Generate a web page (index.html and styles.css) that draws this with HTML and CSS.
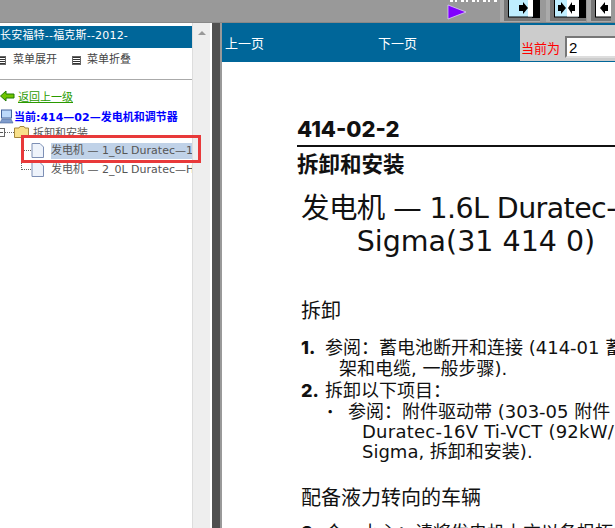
FILE: index.html
```html
<!DOCTYPE html>
<html lang="zh">
<head>
    <meta charset="UTF-8">
    <title>长安福特--福克斯--2012-</title>
    <link rel="stylesheet" href="styles.css">
</head>
<body>
    <div class="topbar">
        <span class="top-scrap"></span>
        <svg class="arrow" width="20" height="16" viewBox="0 0 20 16"><path d="M1 1 L19 8 L1 15 Z" fill="#8000ff" stroke="#e8dcff" stroke-width="0.7"/></svg>
        <div class="nav-btn"><svg width="36" height="21" viewBox="0 0 36 21"><rect width="36" height="21" fill="#777"/><rect x="28" width="8" height="18" fill="#000"/><rect x="4.500" y="-1" width="25" height="18" fill="#bfeeff" stroke="#000"/><rect x="24" width="5" height="16.500" fill="#fff"/><path d="M15 5 H19 V2 L24 8 L19 14 V11 H15 Z" fill="#000"/></svg></div>
        <div class="nav-btn"><svg width="36" height="21" viewBox="0 0 36 21"><rect width="36" height="21" fill="#777"/><rect x="28" width="8" height="18" fill="#000"/><rect x="4.500" y="-1" width="25" height="18" fill="#bfeeff" stroke="#000"/><rect x="17" width="12" height="16.500" fill="#fff"/><path d="M8 5 H11 V2 L16 8 L11 14 V11 H8 Z M25 5 H22 V2 L18 8 L22 14 V11 H25 Z" fill="#000"/></svg></div>
        <div class="nav-btn"><svg width="20" height="21" viewBox="0 0 20 21"><rect width="20" height="21" fill="#777"/><rect x="4.500" y="-1" width="22" height="18" fill="#fff" stroke="#000"/><path d="M17 5 H14 V2 L9 8 L14 14 V11 H17 Z" fill="#000"/></svg></div>
    </div>
    <div class="main">
        <div class="left">
            <div class="left-content">
                <div class="left-title">长安福特--福克斯--2012-</div>
                <div class="menu-row">
                    <span class="menu-item"><i class="menu-icon icon-cut"></i>菜单展开</span>
                    <span class="menu-item"><i class="menu-icon"></i>菜单折叠</span>
                </div>
                <a class="back-link" href="#">
                    <svg width="15" height="12" viewBox="0 0 15 12"><path d="M0.500 6 L6 1 V4 H14 V8 H6 V11 Z" fill="#6fc400" stroke="#1f7a00"/></svg>
                    返回上一级
                </a>
                <div class="current">
                    <svg width="15" height="15" viewBox="0 0 15 15"><rect x="2.500" y="1" width="10" height="8" fill="#bcd8fa" stroke="#46649c"/><path d="M1 14 L3 10 H12 L14 14 Z" fill="#7f9ccc" stroke="#46649c" stroke-width=".6"/></svg>
                    当前:414—02—发电机和调节器
                </div>
                <div class="tree">
                    <div class="tree-folder">
                        <i class="expander"></i>
                        <i class="dots"></i>
                        <svg width="15" height="12" viewBox="0 0 15 12"><path d="M0.500 2 H5 L6 .5 H10 L11 2 H14.500 V11.500 H0.500 Z" fill="#f8e08a" stroke="#a5873a"/></svg>
                        <span class="folder-name">拆卸和安装</span>
                    </div>
                    <div class="tree-leaf leaf-first">
                        <svg class="doc" width="13" height="15" viewBox="0 0 13 15"><path d="M1 .5 H9 L12.500 4 V14.500 H1 Z" fill="#eef3fb" stroke="#7d8fb5"/></svg>
                        <span class="leaf-text selected">发电机 — 1_6L Duratec—1</span>
                    </div>
                    <div class="tree-leaf">
                        <svg class="doc" width="13" height="15" viewBox="0 0 13 15"><path d="M1 .5 H9 L12.500 4 V14.500 H1 Z" fill="#eef3fb" stroke="#7d8fb5"/></svg>
                        <span class="leaf-text">发电机 — 2_0L Duratec—H</span>
                    </div>
                    <div class="highlight-box"></div>
                </div>
            </div>
            <div class="scrollbar"><span class="scroll-up"></span></div>
        </div>
        <div class="splitter"></div>
        <div class="right">
            <div class="pager">
                <span class="prev">上一页</span>
                <span class="next">下一页</span>
                <div class="page-form">
                    <label>当前为</label>
                    <input class="page-input" type="text" value="2">
                </div>
            </div>
            <div class="doc-page">
                <div class="doc-num">414-02-2</div>
                <div class="doc-sub">拆卸和安装</div>
                <h1><span class="title-first">发电机 — 1.6L Duratec-</span>Sigma(31 414 0)</h1>
                <h2>拆卸</h2>
                <ol class="steps">
                    <li><b>1.</b><span>参阅：蓄电池断开和连接 (414-01 蓄<br><span class="cont">架和电缆, 一般步骤).</span></span></li>
                    <li class="step-gap"><b>2.</b><span>拆卸以下项目：</span></li>
                    <li class="sub"><b>·</b><span>参阅：附件驱动带 (303-05 附件<br><span class="cont wide">Duratec-16V Ti-VCT (92kW/</span><br><span class="cont">Sigma, 拆卸和安装).</span></span></li>
                </ol>
                <h2 class="h2-second">配备液力转向的车辆</h2>
                <ol class="steps steps-last">
                    <li><b>3.</b><span>合。小心：请将发电机上方以各根柘线才</span></li>
                </ol>
            </div>
        </div>
    </div>
</body>
</html>
```

FILE: styles.css
```css
html, body {
    margin: 0;
    height: 100%;
    overflow: hidden;
}
body {
    background-color: #fff;
    font-family: "DejaVu Sans", "Noto Sans CJK SC", sans-serif;
    color: #333;
}
.topbar {
    position: relative;
    height: 23px;
    background-color: #999;
    display: flex;
    align-items: flex-start;
    border-bottom: 1px solid #888;
    box-sizing: border-box;
    overflow: hidden;
}
/* bottom edge of a white caption cut off by the window */
.top-scrap {
    position: absolute;
    left: 450px;
    top: 0;
    width: 48px;
    height: 2px;
    background: repeating-linear-gradient(90deg, #fff 0 3px, transparent 3px 5px, #fff 5px 7px, transparent 7px 11px);
}
.arrow {
    margin: 4px 33px 0 447px;
}
.nav-btn {
    height: 22px;
    background-color: #aaa;
    padding-left: 4px;
    display: flex;
}
.nav-btn + .nav-btn {
    margin-left: 6px;
}
.nav-btn:last-child {
    margin-left: 1px;
}
.main {
    display: flex;
    height: 505px;
}
.left {
    width: 212px;
    display: flex;
    flex-shrink: 0;
}
.left-content {
    width: 192px;
    padding-top: 3px;
    flex-shrink: 0;
}
.left-title {
    height: 22px;
    line-height: 19px;
    background-color: #069;
    color: #fff;
    font-size: 11px;
    letter-spacing: .2px;
    white-space: nowrap;
    overflow: hidden;
}
.menu-row {
    display: flex;
    gap: 15px;
    height: 31px;
    line-height: 24px;
    font-size: 11px;
    border-bottom: 1px solid #aaa;
    margin-bottom: 8px;
    color: #444;
}
.menu-item {
    display: flex;
    align-items: center;
    height: 24px;
}
.menu-icon {
    width: 7px;
    height: 7px;
    border: 1px solid #666;
    background: repeating-linear-gradient(#333 0 1px, #fff 1px 2px);
    margin-right: 6px;
}
.icon-cut {
    margin-left: -3px;
    margin-right: 7px;
}
.back-link {
    display: flex;
    align-items: center;
    gap: 3px;
    font-size: 11px;
    color: #2a9a00;
    height: 16px;
    text-decoration: underline;
    width: 75px;
    white-space: nowrap;
}
.current {
    display: flex;
    align-items: center;
    margin: 4px 0 0 -1px;
    color: #00f;
    font-size: 11px;
    font-weight: bold;
    height: 16px;
    white-space: nowrap;
    overflow: hidden;
}
.tree {
    position: relative;
    font-size: 11px;
    color: #555;
}
.tree-folder {
    display: flex;
    align-items: center;
    height: 16px;
}
.expander {
    width: 5px;
    height: 7px;
    border: 1px solid #666;
    border-left: none;
    margin-left: -1px;
    background: linear-gradient(#555, #555) center / 3px 1px no-repeat;
    flex-shrink: 0;
}
.dots {
    width: 9px;
    border-top: 1px dotted #666;
}
.folder-name {
    margin-left: 4px;
}
.tree-leaf {
    position: relative;
    display: flex;
    align-items: center;
    height: 19px;
    padding-left: 31px;
    gap: 7px;
    white-space: nowrap;
    overflow: hidden;
}
.tree-leaf::before {
    content: "";
    position: absolute;
    left: 21px;
    top: -8px;
    width: 9px;
    height: 17px;
    border-left: 1px dotted #666;
    border-bottom: 1px dotted #666;
}
.leaf-first {
    margin-top: 1px;
}
.doc {
    flex-shrink: 0;
}
.leaf-text {
    color: #555;
    line-height: 16px;
}
.selected {
    background-color: #c0d2e8;
    flex: 1;
}
.highlight-box {
    position: absolute;
    left: 21px;
    top: 11px;
    width: 180px;
    height: 28px;
    border: 3px solid #e8393a;
    box-sizing: border-box;
}
.scrollbar {
    width: 20px;
    background-color: #eee;
    border-left: 1px solid #ddd;
    border-right: 2px solid #fff;
    box-sizing: border-box;
}
.scroll-up {
    display: block;
    width: 0;
    height: 0;
    margin: 8px auto 0;
    border-left: 4px solid transparent;
    border-right: 4px solid transparent;
    border-bottom: 4px solid #999;
}
.splitter {
    width: 10px;
    flex-shrink: 0;
    background-color: #505050;
    border-right: 2px solid #999;
    box-sizing: border-box;
}
.right {
    flex: 1;
    min-width: 0;
    overflow: hidden;
}
.pager {
    height: 39px;
    background-color: #069;
    color: #fff;
    font-size: 13px;
    display: flex;
    align-items: center;
}
.prev {
    margin-left: 3px;
}
.next {
    margin-left: 114px;
}
.page-form {
    margin-left: auto;
    width: 95px;
    height: 36px;
    margin-top: 1px;
    background-color: #ccc;
    display: flex;
    align-items: flex-end;
    box-sizing: border-box;
    padding-bottom: 3px;
    color: #f00;
    font-size: 13px;
}
.page-form label {
    white-space: nowrap;
    margin-left: 1px;
    line-height: 18px;
}
.page-input {
    width: 50px;
    height: 22px;
    margin: 0 0 0 5px;
    padding: 0 0 0 2px;
    box-sizing: border-box;
    border: 2px solid #777;
    border-right: none;
    border-bottom-color: #ddd;
    font-size: 15px;
    font-family: "Liberation Sans", sans-serif;
}
.doc-page {
    padding: 55px 0 0 75px;
    color: #111;
    white-space: nowrap;
}
.doc-num {
    font-family: "Inter", sans-serif;
    font-size: 22px;
    font-weight: 800;
    line-height: 24px;
    border-bottom: 2px solid #111;
    padding-bottom: 4px;
}
.doc-sub {
    font-size: 21.500px;
    font-weight: 700;
    line-height: 26px;
    margin-top: 3px;
    margin-bottom: 1px;
    font-family: "Noto Sans CJK SC", sans-serif;
}
h1 {
    font-size: 28.500px;
    font-weight: 400;
    line-height: 33px;
    margin: 16px 0 0 4px;
    text-align: center;
    width: 350px;
}
.title-first {
    display: block;
    text-align: left;
    letter-spacing: -.6px;
}
h2 {
    font-size: 20px;
    font-weight: 400;
    line-height: 26px;
    margin: 39px 0 0 4px;
    font-family: "Noto Sans CJK SC", sans-serif;
}
.h2-second {
    margin-top: 22px;
}
.steps {
    list-style: none;
    margin: 14px 0 0 4px;
    padding: 0;
    font-size: 18px;
    line-height: 21px;
}
.steps-last {
    margin-top: 12px;
}
.steps li {
    display: flex;
}
.steps li b {
    width: 24px;
    flex-shrink: 0;
    font-family: "Inter", sans-serif;
    font-weight: 800;
}
.step-gap {
    margin-top: 1px;
}
.steps li.sub {
    padding-left: 26px;
    margin-top: 1px;
    line-height: 20px;
}
.steps li.sub b {
    width: 21px;
}
.cont {
    margin-left: 14px;
}
.wide {
    letter-spacing: .25px;
}
```
